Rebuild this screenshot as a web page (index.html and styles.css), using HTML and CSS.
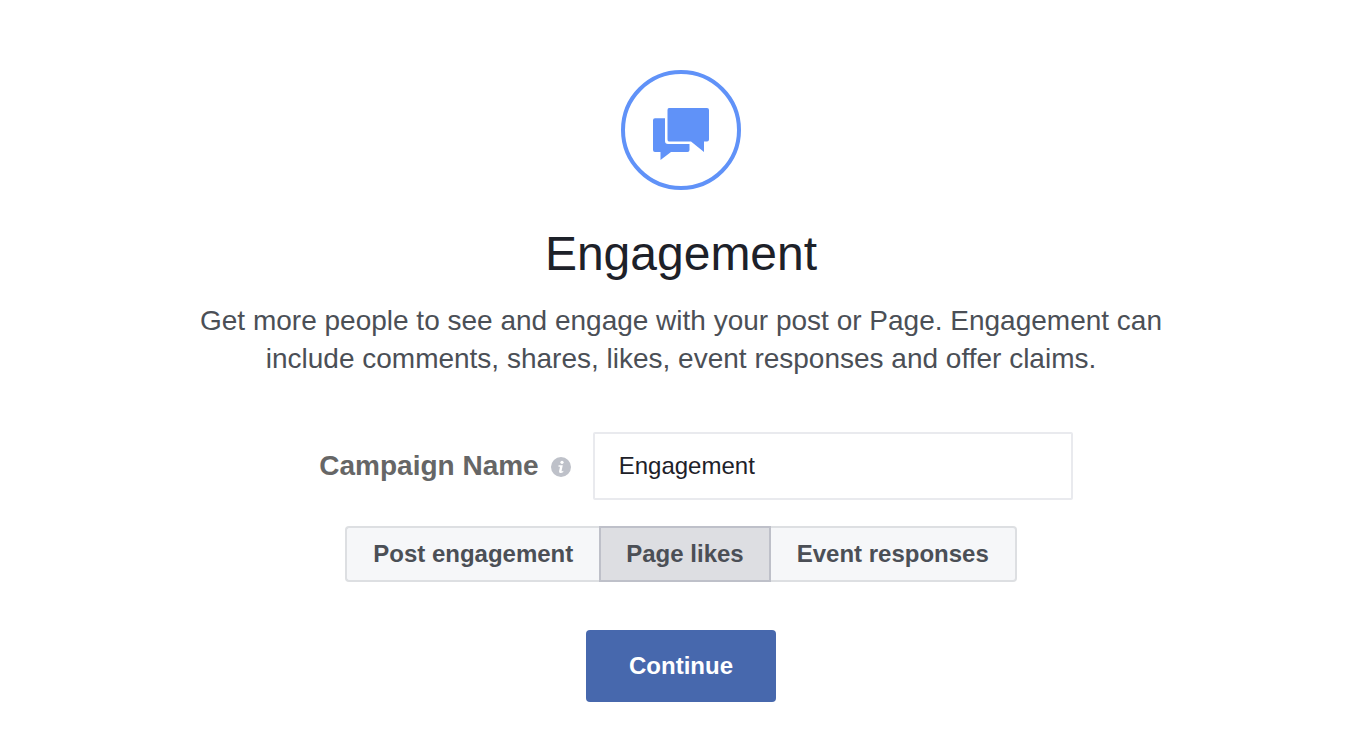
FILE: index.html
```html
<!DOCTYPE html>
<html lang="en">
<head>
  <meta charset="UTF-8" />
  <meta name="viewport" content="width=device-width, initial-scale=1.0"/>
  <title>Engagement</title>
  <link rel="stylesheet" href="styles.css">
</head>
<body>

  <main class="objective">
    <svg class="objective-icon" viewBox="0 0 120 120" aria-hidden="true">
      <circle cx="60" cy="60" r="58" fill="none" stroke="currentColor" stroke-width="4"/>
      <path fill="currentColor" d="M48 38H86Q88 38 88 40V69.500Q88 71.500 86 71.500H83V82L70 71.500H48Q46.500 71.500 46.500 69.500V40Q46.500 38 48 38Z"/>
      <path fill="currentColor" d="M34 48.300H44V71Q44 74 47 74H68.500V80Q68.500 82 66.500 82H50L39.500 90V82H34Q32 82 32 80V50.300Q32 48.300 34 48.300Z"/>
    </svg>

    <h1>Engagement</h1>
    <p class="description">Get more people to see and engage with your post or Page. Engagement can include comments, shares, likes, event responses and offer claims.</p>

    <form class="campaign-form">
      <div class="field">
        <label for="campaignName">Campaign Name</label>
        <svg class="info-icon" viewBox="0 0 20 20" aria-hidden="true">
          <circle cx="10" cy="10" r="10" fill="#bec1c9"/>
          <circle cx="11" cy="5.300" r="1.600" fill="#fff"/>
          <path d="M7.500 8.200H11.800L10.500 14.200Q11.300 14.400 12.300 13.700V15Q10.800 16.300 9 16Q7.700 15.600 8.100 14L9 9.700H7.500Z" fill="#fff"/>
        </svg>
        <input type="text" id="campaignName" value="Engagement">
      </div>

      <div class="segments">
        <button type="button">Post engagement</button>
        <button type="button" class="selected" aria-pressed="true">Page likes</button>
        <button type="button">Event responses</button>
      </div>

      <button type="submit" class="continue">Continue</button>
    </form>
  </main>

</body>
</html>
```

FILE: styles.css
```css
:root {
  --accent: #6092f8;
  --primary: #4768ad;
  --text: #1d2129;
  --muted: #4b4f56;
  --border: #dddfe2;
}

* {
  box-sizing: border-box;
}

body {
  margin: 0;
  font-family: "Liberation Sans", Arial, sans-serif;
  background: #fff;
  color: var(--text);
}

.objective {
  display: flex;
  flex-direction: column;
  align-items: center;
  padding: 70px 20px 32px 26px;
  text-align: center;
}

.objective-icon {
  width: 120px;
  height: 120px;
  color: var(--accent);
}

h1 {
  margin: 36px 0 20px;
  font-size: 48px;
  font-weight: normal;
  line-height: 56px;
}

.description {
  max-width: 980px;
  margin: 0;
  font-size: 28px;
  line-height: 38px;
  color: var(--muted);
}

.campaign-form {
  display: flex;
  flex-direction: column;
  align-items: center;
  margin-top: 54px;
}

.field {
  display: flex;
  align-items: center;
  margin-left: 30px;
}

.field label {
  font-size: 28px;
  font-weight: bold;
  color: #666;
}

.info-icon {
  width: 20px;
  height: 20px;
  margin: 2px 22px 0 12px;
}

.field input {
  width: 480px;
  height: 68px;
  padding: 0 24px;
  border: 2px solid #e9eaee;
  border-radius: 2px;
  background: #fff;
  color: var(--text);
  font-family: inherit;
  font-size: 24px;
}

button {
  font-family: inherit;
  font-size: 24px;
  font-weight: bold;
  cursor: pointer;
}

.segments {
  display: flex;
  margin-top: 26px;
}

.segments button {
  height: 56px;
  padding: 0 26px;
  border: 2px solid var(--border);
  background: #f6f7f9;
  color: var(--muted);
}

.segments button:first-child {
  border-right: 0;
  border-radius: 4px 0 0 4px;
}

.segments button:last-child {
  border-left: 0;
  border-radius: 0 4px 4px 0;
}

.segments .selected {
  padding: 0 25px;
  border-color: #bec0c9;
  background: #dddee2;
}

.continue {
  height: 72px;
  margin-top: 48px;
  padding: 0 43px;
  border: 0;
  border-radius: 4px;
  background: var(--primary);
  color: #fff;
}
```
